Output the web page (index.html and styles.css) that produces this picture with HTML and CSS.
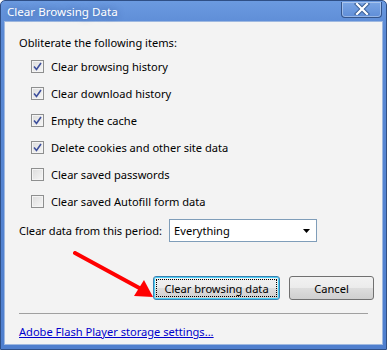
FILE: index.html
```html
<!DOCTYPE html>
<html>
<head>
<meta charset="utf-8">
<link rel="stylesheet" href="styles.css">
</head>
<body>
<div class="window">
  <div class="titlebar">
    <span class="title">Clear Browsing Data</span>
    <div class="close">
      <svg width="20" height="12" viewBox="0 0 20 12">
        <path d="M5 1 L15 11 M15 1 L5 11" stroke="#3b5f95" stroke-width="4.2" stroke-linecap="square"/>
        <path d="M5 1 L15 11 M15 1 L5 11" stroke="#ffffff" stroke-width="2.2" stroke-linecap="square"/>
      </svg>
    </div>
  </div>
  <div class="client">
    <div class="heading">Obliterate the following items:</div>
    <div class="items">
      <label class="item"><span class="box checked"><svg width="9" height="9" viewBox="0 0 9 9"><path d="M1 4.5 L3.5 7.5 L8 1" fill="none" stroke="#3d4f9c" stroke-width="1.6"/></svg></span>Clear browsing history</label>
      <label class="item"><span class="box checked"><svg width="9" height="9" viewBox="0 0 9 9"><path d="M1 4.5 L3.5 7.5 L8 1" fill="none" stroke="#3d4f9c" stroke-width="1.6"/></svg></span>Clear download history</label>
      <label class="item"><span class="box checked"><svg width="9" height="9" viewBox="0 0 9 9"><path d="M1 4.5 L3.5 7.5 L8 1" fill="none" stroke="#3d4f9c" stroke-width="1.6"/></svg></span>Empty the cache</label>
      <label class="item"><span class="box checked"><svg width="9" height="9" viewBox="0 0 9 9"><path d="M1 4.5 L3.5 7.5 L8 1" fill="none" stroke="#3d4f9c" stroke-width="1.6"/></svg></span>Delete cookies and other site data</label>
      <label class="item"><span class="box"></span>Clear saved passwords</label>
      <label class="item"><span class="box"></span>Clear saved Autofill form data</label>
    </div>
    <div class="period">
      <span>Clear data from this period:</span>
      <div class="select"><span>Everything</span><svg width="7" height="4" viewBox="0 0 7 4"><path d="M0 0 H7 L3.5 4 Z" fill="#000"/></svg></div>
    </div>
    <div class="actions">
      <svg class="arrow" width="90" height="50" viewBox="0 0 90 50">
        <path d="M2 2 L70 39" stroke="#ff0000" stroke-width="4" stroke-linecap="round"/>
        <path d="M80 46 L61 45 L71 29 Z" fill="#ff0000"/>
      </svg>
      <button class="btn primary"><span>Clear browsing data</span></button>
      <button class="btn">Cancel</button>
    </div>
    <div class="sep"></div>
    <a class="link" href="#">Adobe Flash Player storage settings...</a>
  </div>
</div>
</body>
</html>
```

FILE: styles.css
```css
html, body { margin: 0; padding: 0; }
body {
  width: 387px; height: 350px; overflow: hidden;
  font-family: "Noto Sans", "Open Sans", sans-serif;
  font-size: 11.1px;
  color: #000;
}
.window {
  width: 387px; height: 350px; box-sizing: border-box;
  background: linear-gradient(to bottom, #6b9ae0 0px, #5a89d4 30px, #4f7fce 100%);
  border: 1px solid #2f4f86;
  border-radius: 5px 5px 0 0;
  display: flex; flex-direction: column;
  padding: 0 3px 4px 3px;
}
.titlebar {
  height: 20px; display: flex; align-items: center; justify-content: space-between;
  position: relative;
}
.title {
  color: #fff; font-size: 11.6px; padding-left: 3px; padding-top: 1px;
  text-shadow: 0 0 6px rgba(30,60,120,0.5);
}
.close {
  width: 41px; height: 16px; margin-top: -3px; margin-right: 1px;
  box-sizing: border-box;
  border: 1px solid #34558c; border-top: none;
  border-radius: 0 0 4px 4px;
  background: linear-gradient(to bottom, #7aa5e4, #5f8ed8);
  box-shadow: inset 0 0 0 1px rgba(255,255,255,0.35);
  display: flex; align-items: center; justify-content: center;
}
.client {
  flex: 1; background: #f3f3f3;
  border: 1px solid #9eb8e0;
  display: flex; flex-direction: column;
  padding: 12px 7px 0 14px;
}
.heading { height: 18px; line-height: 18px; }
.items { display: flex; flex-direction: column; padding-left: 12px; padding-top: 5px; gap: 9px; }
.item { display: flex; align-items: center; height: 18px; gap: 7px; }
.box {
  width: 13px; height: 13px; box-sizing: border-box;
  border: 1px solid #8e8f8f;
  background: linear-gradient(135deg, #dcdcdc, #f6f6f6);
  box-shadow: inset 0 0 0 1px #f4f4f4;
  display: flex; align-items: center; justify-content: center;
}
.period { display: flex; align-items: center; margin-top: 9px; gap: 7px; }
.select {
  width: 148px; height: 23px; box-sizing: border-box;
  border: 1px solid #7f9db9; background: #fff;
  display: flex; align-items: center; justify-content: space-between;
  padding: 0 6px 0 4px;
}
.actions { display: flex; justify-content: flex-end; gap: 9px; margin-top: 34px; padding-right: 1px; position: relative; }
.arrow { position: absolute; left: 54px; top: -25px; }
.btn {
  height: 24px; box-sizing: border-box;
  font: inherit; color: #000;
  border: 1px solid #707070; border-radius: 3px;
  background: linear-gradient(to bottom, #f2f2f2 0%, #ebebeb 50%, #dddddd 51%, #cfcfcf 100%);
  padding: 0; margin: 0;
}
.btn.primary {
  width: 127px;
  border-color: #3c7fb1;
  box-shadow: inset 0 0 0 1px #48d0f7;
  padding: 2px;
}
.btn.primary span {
  display: flex; align-items: center; justify-content: center;
  height: 100%; outline: 1px dotted #000; outline-offset: -1px;
}
.btn:not(.primary) { width: 85px; }
.sep { height: 1px; background: #a0a0a0; margin: 13px 7px 0 0; }
.link { color: #0000cc; margin-top: 10px; text-decoration: underline; }
```
